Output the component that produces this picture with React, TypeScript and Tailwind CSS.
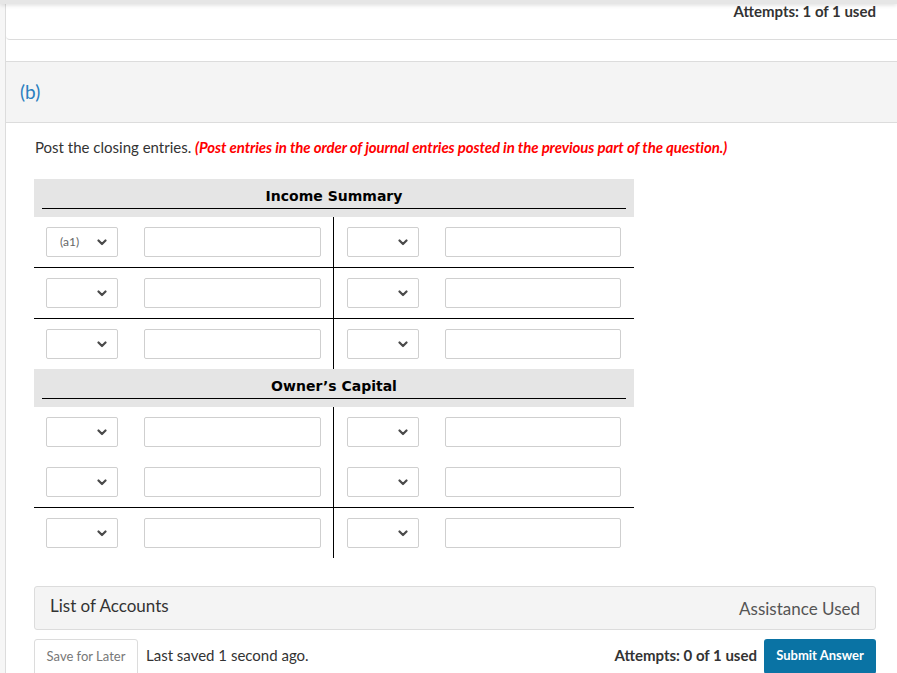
import React from "react";

const Chevron = () => (
  <svg width="10" height="7" viewBox="0 0 10 7" className="shrink-0">
    <polyline points="1.5,1.5 5,5 8.5,1.5" fill="none" stroke="#4a4a4a" strokeWidth="2.2" strokeLinecap="round" strokeLinejoin="round" />
  </svg>
);

const Select = ({ label }: { label?: string }) => (
  <div className="w-[72px] h-[30px] border border-[#cfcfcf] rounded-[2px] bg-white flex items-center justify-between pl-[13px] pr-[10px] shrink-0">
    <span className="text-[12px] text-[#666]" style={{ fontFamily: "Lato, sans-serif" }}>{label ?? ""}</span>
    <Chevron />
  </div>
);

const Input = ({ w }: { w: string }) => (
  <div className={`${w} h-[30px] border border-[#cfcfcf] rounded-[2px] bg-white shrink-0`} />
);

const Row = ({ line, label }: { line?: boolean; label?: string }) => (
  <div className={`flex ${line ? "h-[51px] border-b border-black" : "h-[50px]"}`}>
    <div className="w-[300px] border-r border-black flex items-center pl-[12px]">
      <Select label={label} />
      <div className="w-[26px]" />
      <Input w="w-[177px]" />
    </div>
    <div className="flex-1 flex items-center pl-[13px]">
      <Select />
      <div className="w-[26px]" />
      <Input w="w-[176px]" />
    </div>
  </div>
);

const Header = ({ title }: { title: string }) => (
  <div className="h-[38px] bg-[#e5e5e5] px-[8px] pt-[8px]">
    <div className="h-[22px] border-b border-black text-center text-[14px] font-bold text-black leading-[18px]" style={{ fontFamily: "Verdana, 'DejaVu Sans', sans-serif" }}>
      {title}
    </div>
  </div>
);

export default function App() {
  return (
    <div className="w-[897px] h-[673px] overflow-hidden bg-[#f6f6f6] pl-[5px] relative" style={{ fontFamily: "Lato, sans-serif" }}>
      <div className="absolute top-0 left-0 right-0 h-[4px] bg-[#e6e6e6] shadow-[0_1px_4px_rgba(0,0,0,0.15)] z-10" />
      <div className="bg-white border-l border-[#dcdcdc] w-[912px] min-h-[700px]">
        <div className="h-[40px] border-b border-[#dcdcdc] rounded-bl-[4px] flex items-start justify-end pr-[41px] pt-[0px]">
          <span className="text-[15px] font-bold text-[#333]">Attempts: 1 of 1 used</span>
        </div>
        <div className="h-[21px] bg-white" />
        <div className="border-t border-[#dcdcdc]">
          <div className="h-[61px] bg-[#f4f4f4] border-b border-[#dcdcdc] flex items-center pl-[14px]">
            <span className="text-[19px] text-[#2b7fc0]">(b)</span>
          </div>
          <div className="pl-[28px] pt-[13px]">
            <p className="text-[15px] text-[#333] leading-[22px] pl-[1px]">
              Post the closing entries.{" "}
              <span className="font-bold italic text-[#ff0000] tracking-[-0.1px]">
                (Post entries in the order of journal entries posted in the previous part of the question.)
              </span>
            </p>
            <div className="mt-[21px] w-[600px]">
              <Header title="Income Summary" />
              <Row line label="(a1)" />
              <Row line />
              <Row />
              <Header title="Owner’s Capital" />
              <Row />
              <Row line />
              <Row />
            </div>
            <div className="mt-[28px] w-[842px] h-[44px] bg-[#f4f4f4] border border-[#dcdcdc] rounded-[3px] flex items-center justify-between pl-[15px] pr-[15px]">
              <span className="text-[17px] text-[#333] mb-[4px]">List of Accounts</span>
              <span className="text-[17px] text-[#555] pt-[1px]">Assistance Used</span>
            </div>
            <div className="mt-[9px] w-[842px] flex items-start">
              <div className="w-[104px] h-[38px] border border-[#dcdcdc] rounded-[3px] bg-white flex items-center justify-center">
                <span className="text-[13px] text-[#777] mb-[2px]">Save for Later</span>
              </div>
              <span className="ml-[8px] text-[15px] text-[#333] leading-[32px]">Last saved 1 second ago.</span>
              <div className="flex-1" />
              <span className="text-[15px] font-bold text-[#333] leading-[32px]">Attempts: 0 of 1 used</span>
              <div className="ml-[7px] w-[112px] h-[35px] bg-[#0a73a4] rounded-[3px] flex items-center justify-center">
                <span className="text-[13px] font-bold text-white mb-[2px]">Submit Answer</span>
              </div>
            </div>
          </div>
        </div>
      </div>
    </div>
  );
}
